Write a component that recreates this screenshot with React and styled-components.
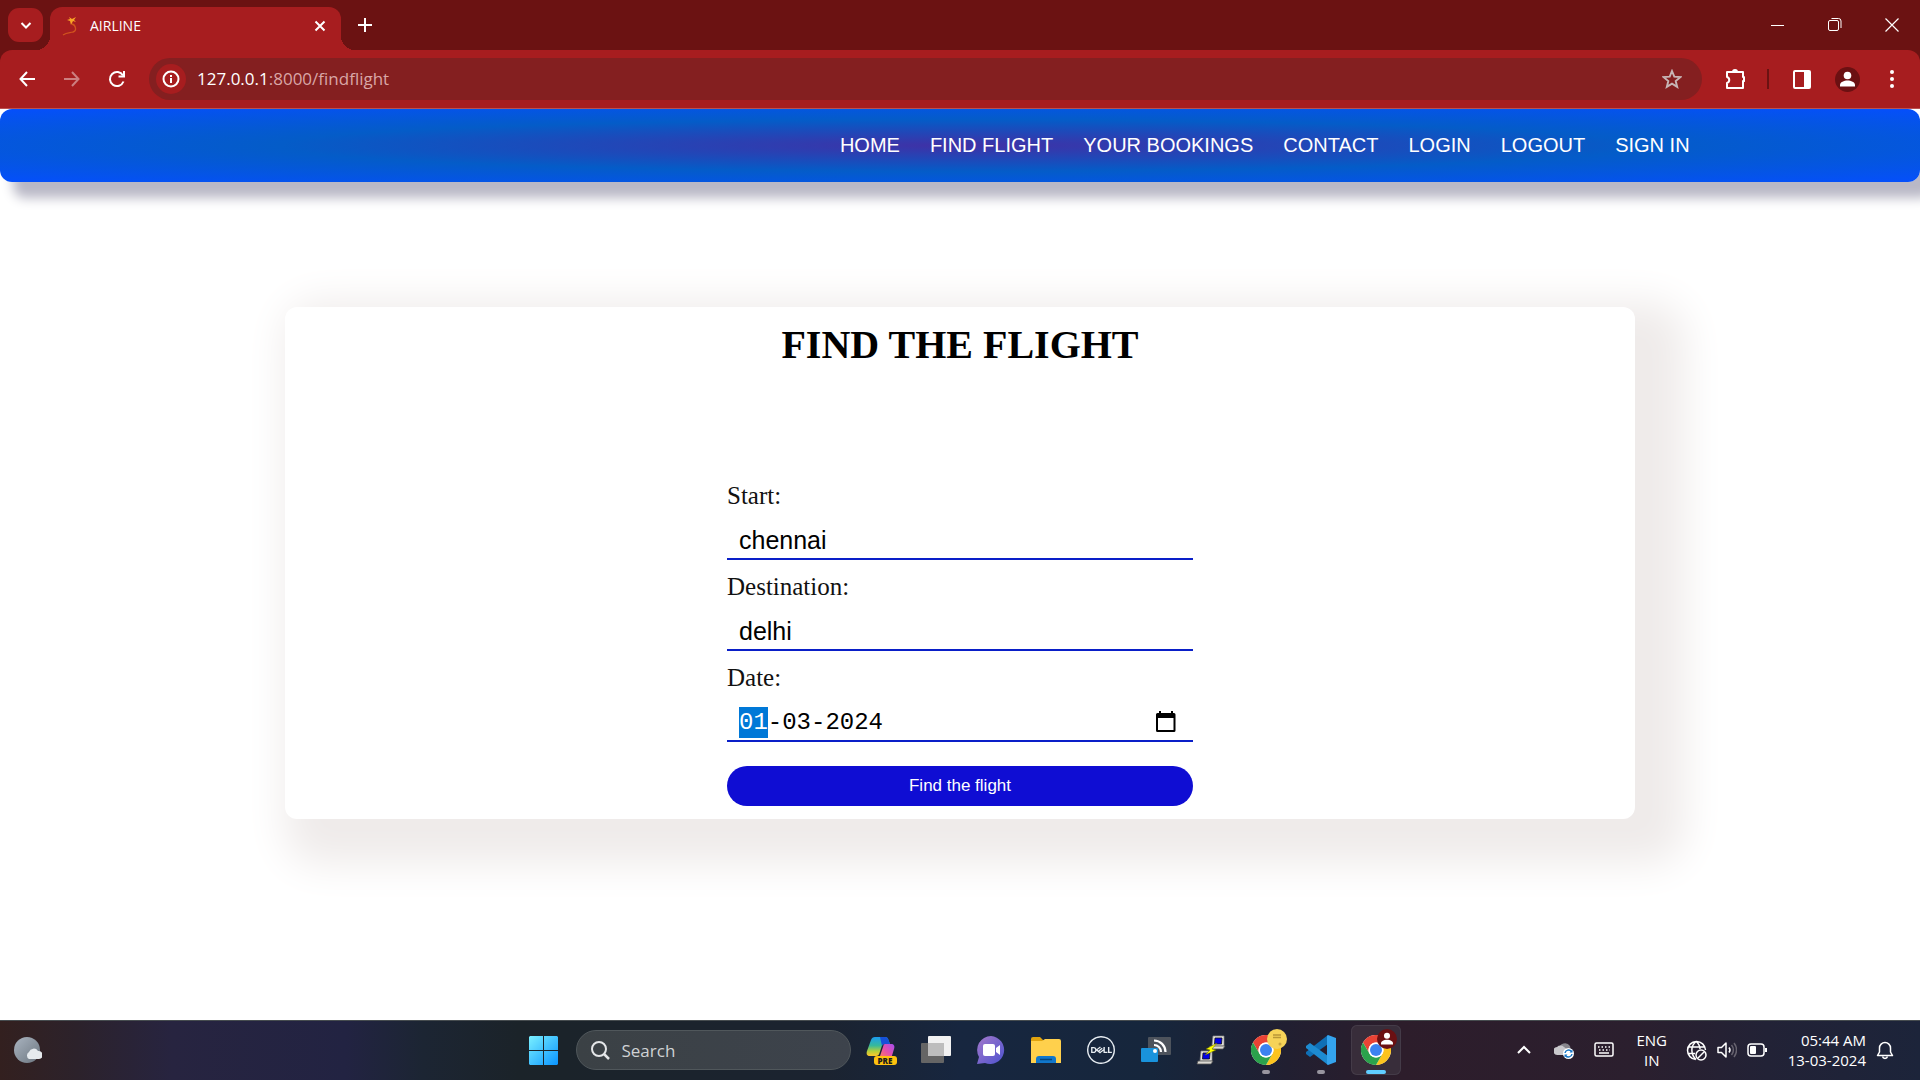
import React, { useEffect, useRef, useState } from "react";
import styled, { createGlobalStyle } from "styled-components";
import { SiDell } from "react-icons/si";

const ui = `"Open Sans", "Noto Sans", sans-serif`;
const arial = `"Liberation Sans", Arial, sans-serif`;
const times = `"Liberation Serif", "Times New Roman", serif`;

const GlobalStyle = createGlobalStyle`
  *, *::before, *::after { box-sizing: border-box; }
  body { margin: 0; background: #fff; font-family: ${times}; }
  button { border: 0; padding: 0; background: none; color: inherit; font: inherit; }
  button, a { cursor: pointer; }
  svg { display: block; }
`;

const Screen = styled.div`
  display: flex;
  flex-direction: column;
  min-height: 100vh;
`;

/* ---------- browser chrome ---------- */

const TitleBar = styled.header`
  display: flex;
  align-items: flex-end;
  height: 50px;
  padding-left: 8px;
  background: #6b1212;
  color: #fff;
  font-family: ${ui};
`;

const TabSearch = styled.button`
  display: grid;
  place-items: center;
  width: 35px;
  height: 34px;
  margin: 0 7px 8px 0;
  border-radius: 11px;
  background: #a71d1f;
`;

const Tab = styled.div`
  position: relative;
  display: flex;
  align-items: center;
  width: 291px;
  height: 43px;
  padding: 0 13px 6px 12px;
  border-radius: 12px 12px 0 0;
  background: #a71d1f;
  font-size: 14px;

  &::before,
  &::after {
    content: "";
    position: absolute;
    bottom: 0;
    width: 14px;
    height: 14px;
  }
  &::before {
    right: 100%;
    background: radial-gradient(circle at 0 0, transparent 14px, #a71d1f 14px);
  }
  &::after {
    left: 100%;
    background: radial-gradient(circle at 100% 0, transparent 14px, #a71d1f 14px);
  }
`;

const TabTitle = styled.span`
  flex: 1;
  margin-left: 12px;
`;

const TabButton = styled.button`
  display: grid;
  place-items: center;
  width: 16px;
  height: 16px;
`;

const NewTab = styled(TabButton)`
  margin: 0 0 17px 16px;
`;

const WindowControls = styled.div`
  display: flex;
  align-self: stretch;
  margin-left: auto;
`;

const WindowButton = styled.button`
  display: grid;
  place-items: center;
  width: 57px;
  height: 49px;
`;

const ToolbarBack = styled.div`
  background: #6b1212;
`;

const Toolbar = styled.div`
  display: flex;
  align-items: center;
  height: 59px;
  padding: 0 16px 1px 15px;
  border-bottom: 1px solid #bb5152;
  border-radius: 12px 12px 0 0;
  background: #a71d1f;
  color: #fff;
`;

const ToolGroup = styled.div`
  display: flex;
  align-items: center;
  gap: ${(p) => p.$gap}px;
`;

const ToolButton = styled.button`
  display: grid;
  place-items: center;
  width: 24px;
  height: 24px;
  color: ${(p) => (p.$dim ? "#cc7f80" : "#fff")};
`;

const Omnibox = styled.div`
  display: flex;
  flex: 1;
  align-items: center;
  height: 42px;
  margin: 0 20px;
  padding: 0 18px 0 7px;
  border-radius: 21px;
  background: #841f20;
  font-family: ${ui};
  font-size: 17px;
`;

const SiteInfo = styled.button`
  display: grid;
  place-items: center;
  width: 30px;
  height: 30px;
  margin-right: 11px;
  border-radius: 50%;
  background: #a71d1f;
`;

const Address = styled.div`
  flex: 1;
  color: #d9a6a6;

  strong {
    color: #fff;
    font-weight: 400;
  }
`;

const Divider = styled.span`
  width: 2px;
  height: 20px;
  background: #6b1212;
`;

/* ---------- web page ---------- */

const Nav = styled.nav`
  display: flex;
  align-items: center;
  justify-content: flex-end;
  gap: 30px;
  height: 73px;
  padding-right: 12%;
  border-radius: 12px;
  background: radial-gradient(#3f31a6, #045cc8, #054ffc);
  box-shadow: 13px 16px 12px #b9b8c6;
  font-family: ${arial};
  font-size: 20px;
`;

const NavLink = styled.a`
  color: #fff;
  text-decoration: none;
`;

const Page = styled.main`
  flex: 1;
  padding: 125px 24px 40px;
`;

const Card = styled.section`
  display: flex;
  flex-direction: column;
  align-items: center;
  max-width: 1350px;
  margin: 0 auto;
  padding: 15px 24px 13px;
  border-radius: 12px;
  background: #fff;
  box-shadow: 25px 20px 40px 25px #efebea;
`;

const Heading = styled.h1`
  margin: 0 0 113px;
  font-size: 40px;
  line-height: 46px;
`;

const Form = styled.form`
  display: flex;
  flex-direction: column;
  gap: 12px;
  width: 100%;
  max-width: 466px;
`;

const Field = styled.div`
  display: flex;
  flex-direction: column;
  gap: 11px;
`;

const Label = styled.label`
  color: #111;
  font-size: 25px;
  line-height: 30px;
`;

const Control = styled.div`
  display: flex;
  align-items: center;
  height: 38px;
  padding: 0 16px 0 12px;
  border-bottom: 2px solid #0a1fc8;
`;

const TextInput = styled.input`
  flex: 1;
  min-width: 0;
  height: 31px;
  padding: 0;
  border: 0;
  outline: 0;
  background: none;
  color: #000;
  font-family: ${(p) => (p.$mono ? `"Liberation Mono", monospace` : arial)};
  font-size: ${(p) => (p.$mono ? 24 : 25)}px;
  line-height: 31px;

  &::selection {
    background: #0078d7;
    color: #fff;
  }
`;

const Submit = styled.button`
  height: 40px;
  margin-top: 12px;
  border-radius: 20px;
  background: #0f0dd3;
  color: #fff;
  font-family: ${arial};
  font-size: 17px;
`;

/* ---------- taskbar ---------- */

const Taskbar = styled.footer`
  display: grid;
  grid-template-columns: 1fr auto 1fr;
  align-items: center;
  height: 60px;
  padding-bottom: 1px;
  border-top: 1px solid #464c4f;
  background: linear-gradient(
    90deg,
    #33201f 0%,
    #2c222b 4%,
    #272440 9%,
    #222342 18%,
    #1c2533 22%,
    #1b2329 27%,
    #1b2330 43%,
    #17263f 50%,
    #16263c 60%,
    #211f31 67%,
    #2d1d2b 73%,
    #2b1f2e 85%,
    #222236 92%,
    #1c243a 100%
  );
  color: #fff;
  font-family: ${ui};
`;

const Weather = styled.button`
  justify-self: start;
  margin-left: 14px;
`;

const Apps = styled.div`
  display: flex;
  align-items: center;
`;

const AppSlot = styled.button`
  position: relative;
  display: grid;
  place-items: center;
  width: 50px;
  height: 50px;
  margin: 0 3px 0 2px;
  border-radius: 6px;
  background: ${(p) => (p.$active ? "#382d3a" : "none")};
  box-shadow: ${(p) => (p.$active ? "inset 0 0 0 1px #443b48" : "none")};
`;

const Running = styled.i`
  position: absolute;
  bottom: 1px;
  left: 50%;
  width: ${(p) => (p.$active ? 20 : 8)}px;
  height: 4px;
  border-radius: 2px;
  background: ${(p) => (p.$active ? "#60cdff" : "#98959f")};
  transform: translateX(-50%);
`;

const Badge = styled.span`
  position: absolute;
  top: 4px;
  right: 4px;
`;

const PreTag = styled.span`
  position: absolute;
  right: 9px;
  bottom: 10px;
  width: 23px;
  border-radius: 3px;
  background: #ffc20e;
  color: #1b1b1b;
  font-size: 8px;
  font-weight: 800;
  line-height: 9px;
  text-align: center;
`;

const Search = styled.label`
  display: flex;
  align-items: center;
  gap: 12px;
  width: 275px;
  height: 40px;
  margin: 0 3px 0 4px;
  padding: 0 14px;
  border: 1px solid #50575b;
  border-radius: 20px;
  background: linear-gradient(90deg, #3b4145, #3d434c);
`;

const SearchInput = styled.input`
  flex: 1;
  min-width: 0;
  padding: 0;
  border: 0;
  outline: 0;
  background: none;
  color: #fff;
  font-family: ${ui};
  font-size: 17px;

  &::placeholder {
    color: #cfd2d4;
    opacity: 1;
  }
`;

const Tray = styled.div`
  display: flex;
  align-items: center;
  justify-self: end;
  padding-right: 26px;
  font-size: 15px;
  line-height: 20px;
`;

const TrayButton = styled.button`
  display: flex;
  align-items: center;
  justify-content: center;
  width: ${(p) => (p.$w ? `${p.$w}px` : "auto")};
  text-align: ${(p) => p.$align || "center"};
`;

const StatusButton = styled(TrayButton)`
  gap: 10px;
  margin: 0 21px 0 6px;
`;

const Clock = styled(TrayButton)`
  margin-right: 10px;
`;

/* ---------- drawings ---------- */

const Svg = ({ w = 20, h, box, children, ...rest }) => (
  <svg
    width={w}
    height={h || w}
    viewBox={box || `0 0 ${w} ${h || w}`}
    fill="none"
    stroke="currentColor"
    strokeWidth="2"
    aria-hidden="true"
    {...rest}
  >
    {children}
  </svg>
);

const ChromeLogo = () => (
  <Svg w={30} box="-15 -15 30 30" stroke="none">
    <circle r="15" fill="#fff" />
    <path d="M-13 -7.5A15 15 0 0 1 13 -7.5H0A7.5 7.5 0 0 0 -6.5 3.75Z" fill="#e94335" />
    <path d="M13 -7.5A15 15 0 0 1 0 15L6.5 3.75A7.5 7.5 0 0 0 0 -7.5Z" fill="#fcc31e" />
    <path d="M0 15A15 15 0 0 1 -13 -7.5L-6.5 3.75A7.5 7.5 0 0 0 6.5 3.75Z" fill="#2ba24c" />
    <circle r="7.5" fill="#fff" />
    <circle r="6" fill="#3b82f0" />
  </Svg>
);

const Person = ({ size }) => (
  <Svg w={size} box="0 0 25 25" stroke="none">
    <circle cx="12.500" cy="12.500" r="12.500" fill="#6b1012" />
    <circle cx="12.500" cy="8.500" r="3.800" fill="#fff" />
    <path d="M5 19.500v-1.500c0-3 4-4.500 7.500-4.500s7.500 1.500 7.500 4.500v1.500z" fill="#fff" />
  </Svg>
);

const CopilotLogo = () => (
  <Svg w={30} stroke="none">
    <defs>
      <linearGradient id="cpA" x1="0" y1="0" x2="0" y2="1">
        <stop offset="0" stopColor="#1b9cf0" />
        <stop offset=".45" stopColor="#36b99b" />
        <stop offset=".75" stopColor="#b4cf3a" />
        <stop offset="1" stopColor="#ffc52b" />
      </linearGradient>
      <linearGradient id="cpB" x1="1" y1="0" x2="0" y2="1">
        <stop offset="0" stopColor="#a44df0" />
        <stop offset=".5" stopColor="#e650a8" />
        <stop offset="1" stopColor="#ff8a4c" />
      </linearGradient>
    </defs>
    <path d="M9 2H19c2 0 3 1 3.500 3L24 9h-5c-2 0-3 1-3.500 3l-2 6c-.5 2-1.500 3-3.500 3H4c-3 0-4-2-3-5L5 5c.7-2 2-3 4-3z" fill="url(#cpA)" />
    <path d="M14 2h5c2 0 3 1 3.500 3L24 9h-5c-1.500 0-2.500.5-3 2z" fill="#1650d8" />
    <path d="M19 9h6c3 0 4 2 3 5l-3 10H13l4-12c.5-2 .8-3 2-3z" fill="url(#cpB)" />
  </Svg>
);

const Computer = ({ x, y }) => (
  <g transform={`translate(${x} ${y})`}>
    <path d="M3 0h11v10H2z" fill="#e4e2dc" stroke="#888" strokeWidth=".7" />
    <path d="M5 2h7l-.5 6H4.500z" fill="#0000e8" stroke="#111" strokeWidth=".8" />
    <path d="M0 10h15l-2 3H-1z" fill="#dcdad4" stroke="#555" strokeWidth=".8" />
  </g>
);

const apps = [
  {
    name: "Copilot",
    icon: <CopilotLogo />,
    extra: <PreTag>PRE</PreTag>,
  },
  {
    name: "Task view",
    icon: (
      <Svg w={30} stroke="none">
        <rect x="7" y="1" width="23" height="20" rx="1" fill="#f1f1f1" />
        <rect x="0" y="8" width="23" height="20" rx="1" fill="#656565" />
        <path d="M7 8h16v13H7z" fill="#bdbdbd" />
      </Svg>
    ),
  },
  {
    name: "Chat",
    icon: (
      <Svg w={28} stroke="none">
        <defs>
          <linearGradient id="chat" x1="0" y1="0" x2="1" y2="1">
            <stop offset="0" stopColor="#a478cb" />
            <stop offset="1" stopColor="#4d53cf" />
          </linearGradient>
        </defs>
        <path d="M14 0a14 14 0 1 1-6 27l-8 1 2-7A14 14 0 0 1 14 0z" fill="url(#chat)" />
        <rect x="6" y="8" width="12" height="12" rx="2" fill="#fff" />
        <path d="M19 12l4-3v10l-4-3z" fill="#fff" />
      </Svg>
    ),
  },
  {
    name: "File Explorer",
    icon: (
      <Svg w={30} stroke="none">
        <path d="M0 4a2 2 0 0 1 2-2h7l4 4H0z" fill="#e0a30e" />
        <path d="M0 6l11 0 3-2h14a2 2 0 0 1 2 2v22H0z" fill="#ffd04c" />
        <path d="M5 28v-4a3 3 0 0 1 3-3h14a3 3 0 0 1 3 3v4z" fill="#1177cc" />
        <path d="M9 24.500h12" stroke="#06457c" strokeWidth="1.500" />
      </Svg>
    ),
  },
  { name: "Dell", icon: <SiDell size={28} color="#e7edf2" aria-hidden="true" /> },
  {
    name: "Wireless display",
    icon: (
      <Svg w={30} stroke="none">
        <rect x="7" y="2" width="23" height="18" rx="1" fill="#4d535c" />
        <rect x="0" y="13" width="17" height="14" rx="1" fill="#1993dc" />
        <circle cx="14" cy="16" r="2" fill="#fff" />
        <path d="M13 10a7 7 0 0 1 7 7M13 5.500A11.500 11.500 0 0 1 24.500 17" stroke="#fff" strokeWidth="2.200" />
      </Svg>
    ),
  },
  {
    name: "PuTTY",
    icon: (
      <Svg w={30} stroke="none">
        <Computer x="14" y="1" />
        <Computer x="2" y="16" />
        <path d="M21 8l-11 6 4 1-5 5 11-5-4-1z" fill="#ffff00" stroke="#666600" strokeWidth=".5" />
      </Svg>
    ),
  },
  {
    name: "Chrome",
    icon: <ChromeLogo />,
    running: true,
    extra: (
      <Badge>
        <Svg w={20} stroke="none">
          <circle cx="10" cy="10" r="10" fill="#f6d358" />
          <path d="M6 6h8M6 8.500h8" stroke="#b99737" strokeWidth="1.500" />
          <circle cx="13" cy="15" r="1.500" fill="#c9a742" />
        </Svg>
      </Badge>
    ),
  },
  {
    name: "Visual Studio Code",
    icon: (
      <Svg w={30} stroke="none">
        <path d="M22 0v9L4 22 0 19v-2z" fill="#0f6fb5" />
        <path d="M22 30v-9L4 8 0 11v2z" fill="#1d8bd1" />
        <path d="M22 0l8 3v24l-8 3-1-1V1z" fill="#34a4ee" />
      </Svg>
    ),
    running: true,
  },
  {
    name: "Chrome, AIRLINE",
    icon: <ChromeLogo />,
    running: true,
    active: true,
    extra: (
      <Badge>
        <Person size={20} />
      </Badge>
    ),
  },
];

const links = ["HOME", "FIND FLIGHT", "YOUR BOOKINGS", "CONTACT", "LOGIN", "LOGOUT", "SIGN IN"];

function Browser() {
  return (
    <>
      <TitleBar>
        <TabSearch aria-label="Search tabs">
          <Svg w={12}><path d="M1.500 4L6 8.500 10.500 4" /></Svg>
        </TabSearch>
        <Tab>
          <Svg w={16} h={20} stroke="none">
            <path d="M7 1l3 2 4-2-2 3 2 2-3-1-2 4-1-4-3-1 3-1z" fill="#f9a526" />
            <path d="M10 8c4 1 5 7 1 8-3 1-6 0-10 3" stroke="#d1541e" strokeWidth="1.300" />
          </Svg>
          <TabTitle>AIRLINE</TabTitle>
          <TabButton aria-label="Close tab">
            <Svg w={12}><path d="M1.500 1.500l9 9M10.500 1.500l-9 9" /></Svg>
          </TabButton>
        </Tab>
        <NewTab aria-label="New tab">
          <Svg w={14}><path d="M7 0v14M0 7h14" /></Svg>
        </NewTab>
        <WindowControls>
          <WindowButton aria-label="Minimize">
            <Svg w={14} strokeWidth="1"><path d="M0 7.500h13" /></Svg>
          </WindowButton>
          <WindowButton aria-label="Restore">
            <Svg w={14} strokeWidth="1">
              <rect x=".5" y="2.500" width="10" height="10" rx="1.500" />
              <path d="M3.500 .5h7a2.500 2.500 0 0 1 2.500 2.500v7" />
            </Svg>
          </WindowButton>
          <WindowButton aria-label="Close">
            <Svg w={14} strokeWidth="1.200"><path d="M.5 .5l13 13M13.500 .5l-13 13" /></Svg>
          </WindowButton>
        </WindowControls>
      </TitleBar>

      <ToolbarBack>
        <Toolbar>
          <ToolGroup $gap={21}>
            <ToolButton aria-label="Back">
              <Svg w={16}><path d="M16 8H2M8 1L1.500 8 8 15" /></Svg>
            </ToolButton>
            <ToolButton aria-label="Forward" $dim>
              <Svg w={16}><path d="M0 8h14M8 1l6.500 7L8 15" /></Svg>
            </ToolButton>
            <ToolButton aria-label="Reload">
              <Svg w={18}>
                <path d="M15.500 11.500A7 7 0 1 1 15 5.500" />
                <path d="M10.500 6.500H16V1" />
              </Svg>
            </ToolButton>
          </ToolGroup>
          <Omnibox>
            <SiteInfo aria-label="View site information">
              <Svg w={18}>
                <circle cx="9" cy="9" r="7.500" />
                <path d="M9 8v5M9 5v2" />
              </Svg>
            </SiteInfo>
            <Address>
              <strong>127.0.0.1</strong>:8000/findflight
            </Address>
            <ToolButton aria-label="Bookmark this tab">
              <Svg w={20} stroke="#c7b5b5" strokeWidth="1.900">
                <path d="M10 2l2.300 5.600 6 .5-4.600 3.900 1.500 5.900-5.200-3.200-5.200 3.200L6.300 12 1.700 8.100l6-.5z" />
              </Svg>
            </ToolButton>
          </Omnibox>
          <ToolGroup $gap={21}>
            <ToolButton aria-label="Extensions">
              <Svg w={22}>
                <path d="M4 4h16v5a2 2 0 0 1 0 4v7H4v-5c3-1 3-5 0-6z" strokeLinejoin="round" />
                <path d="M9 4a2.800 2.800 0 0 1 6 0zM20 8.500a2.500 2.500 0 0 1 0 5.500z" fill="currentColor" stroke="none" />
              </Svg>
            </ToolButton>
            <Divider />
            <ToolButton aria-label="Side panel">
              <Svg w={20}>
                <rect x="2" y="2" width="16" height="17" rx="1" />
                <path d="M12 2h6v17h-6z" fill="currentColor" stroke="none" />
              </Svg>
            </ToolButton>
            <ToolButton aria-label="Profile">
              <Person size={25} />
            </ToolButton>
            <ToolButton aria-label="Menu">
              <Svg w={20} stroke="none" fill="currentColor">
                <circle cx="10" cy="3" r="2" />
                <circle cx="10" cy="10" r="2" />
                <circle cx="10" cy="17" r="2" />
              </Svg>
            </ToolButton>
          </ToolGroup>
        </Toolbar>
      </ToolbarBack>
    </>
  );
}

function FlightForm() {
  const dateRef = useRef(null);
  const [values, setValues] = useState({ start: "chennai", destination: "delhi", date: "01-03-2024" });
  const edit = (e) => setValues({ ...values, [e.target.name]: e.target.value });

  useEffect(() => {
    dateRef.current.focus();
    dateRef.current.setSelectionRange(0, 2);
  }, []);

  return (
    <Form onSubmit={(e) => e.preventDefault()}>
      <Field>
        <Label htmlFor="start">Start:</Label>
        <Control>
          <TextInput id="start" name="start" value={values.start} onChange={edit} />
        </Control>
      </Field>
      <Field>
        <Label htmlFor="destination">Destination:</Label>
        <Control>
          <TextInput id="destination" name="destination" value={values.destination} onChange={edit} />
        </Control>
      </Field>
      <Field>
        <Label htmlFor="date">Date:</Label>
        <Control>
          <TextInput ref={dateRef} id="date" name="date" $mono value={values.date} onChange={edit} />
          <button type="button" aria-label="Open calendar">
            <Svg w={22} stroke="none">
              <path d="M4 0h2v2h10V0h2v2h1a1.500 1.500 0 0 1 1.500 1.500v16a1.500 1.500 0 0 1-1.500 1.500H2.500A1.500 1.500 0 0 1 1 19.500v-16A1.500 1.500 0 0 1 2.500 2H4zM3 7v12h15.500V7z" fill="#000" fillRule="evenodd" />
            </Svg>
          </button>
        </Control>
      </Field>
      <Submit type="submit">Find the flight</Submit>
    </Form>
  );
}

function WindowsTaskbar() {
  return (
    <Taskbar>
      <Weather aria-label="Weather">
        <Svg w={28} stroke="none">
          <defs>
            <linearGradient id="moon" x1="0" y1="0" x2="1" y2="1">
              <stop offset="0" stopColor="#aab4c0" />
              <stop offset="1" stopColor="#6c7680" />
            </linearGradient>
          </defs>
          <circle cx="13" cy="14" r="13" fill="url(#moon)" />
          <path d="M15 23a4 4 0 0 1 0-7 5 5 0 0 1 9-1 4 4 0 0 1 1 8z" fill="#e6eaee" />
        </Svg>
      </Weather>

      <Apps>
        <AppSlot aria-label="Start">
          <Svg w={29} stroke="none">
            <defs>
              <linearGradient id="win" x1="0" y1="0" x2="29" y2="29" gradientUnits="userSpaceOnUse">
                <stop offset="0" stopColor="#7af0ff" />
                <stop offset="1" stopColor="#0a94ff" />
              </linearGradient>
            </defs>
            <path d="M1 0h13v14H0V1zM15 0h13l1 1v13H15zM0 15h14v14H1l-1-1zM15 15h14v13l-1 1H15z" fill="url(#win)" />
          </Svg>
        </AppSlot>
        <Search>
          <Svg w={19} stroke="#e4e6e8">
            <circle cx="8" cy="8" r="7" />
            <path d="M13 13l5 5" strokeWidth="2.500" />
          </Svg>
          <SearchInput type="search" placeholder="Search" aria-label="Search" />
        </Search>
        {apps.map((app) => (
          <AppSlot key={app.name} aria-label={app.name} $active={app.active}>
            {app.icon}
            {app.extra}
            {app.running && <Running $active={app.active} />}
          </AppSlot>
        ))}
      </Apps>

      <Tray>
        <TrayButton $w={40} aria-label="Show hidden icons">
          <Svg w={14}><path d="M1 10l6-6 6 6" /></Svg>
        </TrayButton>
        <TrayButton $w={40} aria-label="OneDrive">
          <Svg w={20} h={18} stroke="none">
            <path d="M5 8a6 6 0 0 1 11-3l1 5-7 4z" fill="#87858c" />
            <path d="M4 14a4 4 0 0 1-1-8 5 5 0 0 1 7 0l4 3v5z" fill="#c9c8cc" />
            <circle cx="14.500" cy="12.500" r="5.500" fill="#fff" />
            <path d="M11 12a3.600 3.600 0 0 1 6.500-1.500M18 13a3.600 3.600 0 0 1-6.500 1.500" stroke="#1273c4" strokeWidth="1.400" />
            <path d="M18.500 8.500v3h-3zM10.500 16.500v-3h3z" fill="#1273c4" />
          </Svg>
        </TrayButton>
        <TrayButton $w={40} aria-label="Touch keyboard">
          <Svg w={20} h={16} strokeWidth="1.500">
            <rect x="1" y="1" width="18" height="13" rx="1.500" />
            <path d="M4 5h12M5 8h11" strokeDasharray="1.500 2" />
            <path d="M5 11h10" />
          </Svg>
        </TrayButton>
        <TrayButton $w={56}>ENG<br />IN</TrayButton>
        <StatusButton aria-label="Network, volume and battery">
          <Svg w={21} strokeWidth="1.500">
            <path d="M10 19.500A9 9 0 1 1 19.500 10M10 19.500C4.500 14 4.500 6 10 1.500M10 1.500c3 2.500 4 5 4 7.500M2 7h16.500M2 13.500h7" />
            <circle cx="15" cy="15" r="5" />
            <path d="M12 18l6-6" />
          </Svg>
          <Svg w={20} h={18} strokeWidth="1.500">
            <path d="M1 6.500h3.500L9 2v14l-4.500-4.500H1z" strokeLinejoin="round" />
            <path d="M12 6.500a4 4 0 0 1 0 5" />
            <path d="M14.500 4a7.500 7.500 0 0 1 0 10M17 2a11 11 0 0 1 0 14" stroke="#67636f" />
          </Svg>
          <Svg w={20} h={14} strokeWidth="1.500">
            <rect x="1" y="1" width="16" height="12" rx="3" />
            <rect x="3" y="3" width="6" height="8" rx="1" fill="currentColor" stroke="none" />
            <path d="M18 5h2v4h-2z" fill="currentColor" stroke="none" />
          </Svg>
        </StatusButton>
        <Clock $align="right">05:44 AM<br />13-03-2024</Clock>
        <TrayButton aria-label="Notifications">
          <Svg w={18} h={20} strokeWidth="1.500">
            <path d="M3.500 12V8a5.500 5.500 0 0 1 11 0v4l2 3.500h-15z" strokeLinejoin="round" />
            <path d="M6.500 16.500a2.600 2.600 0 0 0 5 0" />
          </Svg>
        </TrayButton>
      </Tray>
    </Taskbar>
  );
}

export default function App() {
  return (
    <Screen>
      <GlobalStyle />
      <Browser />
      <Nav>
        {links.map((text) => (
          <NavLink key={text} href="#">
            {text}
          </NavLink>
        ))}
      </Nav>
      <Page>
        <Card>
          <Heading>FIND THE FLIGHT</Heading>
          <FlightForm />
        </Card>
      </Page>
      <WindowsTaskbar />
    </Screen>
  );
}
